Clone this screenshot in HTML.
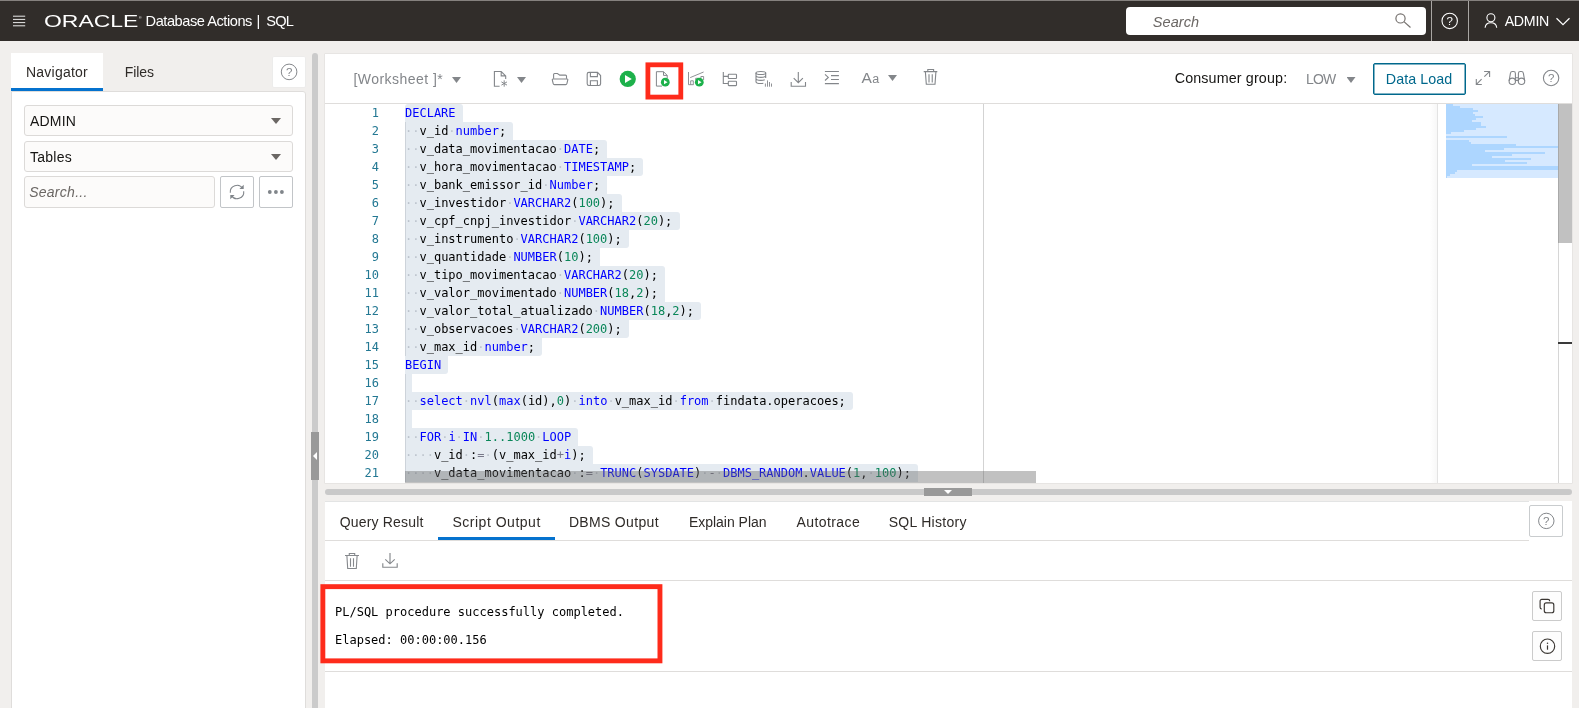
<!DOCTYPE html>
<html lang="en">
<head>
<meta charset="utf-8">
<title>Database Actions | SQL</title>
<style>
*{box-sizing:border-box;margin:0;padding:0}
html,body{width:1579px;height:708px;overflow:hidden;background:#f1efed;font-family:"Liberation Sans",sans-serif;color:#161513}
.abs{position:absolute}
#hdr{left:0;top:0;width:1579px;height:41px;background:#312d2a}
.tx{white-space:nowrap;line-height:20px}
.vsep{top:1px;width:1px;height:40px;background:#a9a6a3}
#srch{left:1126px;top:7px;width:300px;height:28px;background:#fff;border-radius:4px}
/* left panel */
#navtab{left:11px;top:53px;width:92px;height:38px;background:#fff;border-bottom:3px solid #0572ce}
.hbtn{background:#fff;border:1px solid #dcdad8;border-radius:2px}
#lpanel{left:11px;top:91px;width:295px;height:620px;background:#fff;border:1px solid #dfdddb;border-radius:0 3px 0 0}
.sel{left:24px;width:269px;height:31px;background:#fcfbfa;border:1px solid #dcdad8;border-radius:3px}
.tri{width:10px;height:6px;background:#6b6764;clip-path:polygon(0 0,100% 0,50% 100%)}
.tri.g{width:9px;background:#83868a}
#vsplit{left:312px;top:53px;width:6px;height:660px;background:#cbcbcb;border-radius:3px 3px 0 0}
#vhandle{left:311px;top:432px;width:8px;height:48px;background:#999}
/* editor */
#ed{left:325px;top:54px;width:1247px;height:429px;background:#fff;box-shadow:0 0 0 0.5px #dedcda}
#edtb{left:325px;top:54px;width:1247px;height:50px;background:#fff;border-bottom:1px solid #dfdddb}
.code{font-family:"DejaVu Sans Mono","Liberation Mono",monospace;font-size:12px;line-height:18px;white-space:pre;color:#000}
.ln{left:325px;width:54px;text-align:right;color:#237893}
.cl{left:405px}
.code b{font-weight:normal}
.selbg{left:405px;height:18px;background:#e5ebf1}
.mm{left:1446px;height:2px;background:#add6ff}
.k{color:#0000ff}.n{color:#098658}.w{color:#bcc3cc}.o{color:#778}
/* bottom */
#bp{left:325px;top:501px;width:1247px;height:210px;background:#fff}
.hline{height:1px;background:#dfdddb}
</style>
</head>
<body>
<div id="wrap" class="abs" style="left:0;top:0;width:1579px;height:708px;will-change:transform">
<!-- HEADER -->
<div id="hdr" class="abs">
  <div class="abs" style="left:0;top:0;width:1579px;height:1px;background:#85817e"></div>
  <svg class="abs" style="left:13px;top:15px" width="13" height="12" viewBox="0 0 13 12"><path d="M0 1.200h12.200M0 4.400h12.200M0 7.600h12.200M0 10.800h12.200" stroke="#fff" stroke-width="0.9" fill="none"/></svg>
  <svg class="abs" style="left:42px;top:10px" width="102" height="22" viewBox="0 0 102 22"><text x="2" y="16.800" font-family="Liberation Sans, sans-serif" font-size="16.500" fill="#fff" textLength="94.300" lengthAdjust="spacingAndGlyphs">ORACLE</text><text x="97" y="9" font-family="Liberation Sans, sans-serif" font-size="3.500" fill="#fff">®</text></svg>
  <div id="srch" class="abs"></div>
  <div class="abs vsep" style="left:1431px"></div>
  <div class="abs vsep" style="left:1468px"></div>
  <svg class="abs" style="left:1380px;top:0" width="199" height="41" viewBox="1380 0 199 41" fill="none" stroke="#fff" stroke-width="1.100">
    <circle cx="1400.500" cy="18.400" r="4.600" stroke="#75716e" stroke-width="1.200"/><path d="M1403.900 21.600l6.600 5.900" stroke="#75716e" stroke-width="1.200"/>
    <circle cx="1449.700" cy="20.900" r="7.700"/>
    <text x="1449.700" y="25" text-anchor="middle" font-family="Liberation Sans, sans-serif" font-size="11.500" fill="#fff" stroke="none">?</text>
    <circle cx="1490.900" cy="17.800" r="4"/><path d="M1485.100 27.800c.3-3.200 2.500-5 5.800-5s5.500 1.800 5.800 5"/>
    <path d="M1556.500 18.200l6.500 6.400 6.500-6.400" stroke-width="1.200"/>
  </svg>
</div>

<!-- LEFT PANEL -->
<div id="navtab" class="abs"></div>
<div class="abs" style="left:273px;top:57px;width:32px;height:30px;background:#fff;border-radius:1px;box-shadow:0 0 0 0.6px #e9eaea"></div>
<svg class="abs" style="left:280px;top:63px" width="18" height="18" viewBox="0 0 18 18"><circle cx="9.100" cy="8.900" r="7.800" stroke="#83868a" stroke-width="1" fill="none"/><text x="9.100" y="13.100" text-anchor="middle" font-family="Liberation Sans, sans-serif" font-size="11.500" fill="#83868a">?</text></svg>
<div id="lpanel" class="abs"></div>
<div class="abs sel" style="top:105px"><div class="abs tri" style="left:246px;top:12px"></div></div>
<div class="abs sel" style="top:141px"><div class="abs tri" style="left:246px;top:12px"></div></div>
<div class="abs sel" style="top:176px;width:191px;height:32px"></div>
<div class="abs hbtn" style="left:220px;top:176px;width:34px;height:32px;border-color:#c2c5c8"></div>
<div class="abs hbtn" style="left:259px;top:176px;width:34px;height:32px;border-color:#c2c5c8"></div>
<svg class="abs" style="left:220px;top:176px" width="74" height="32" viewBox="220 176 74 32" fill="none" stroke="#80858a" stroke-width="1.100">
<path d="M230.300 192.800a6.700 6.700 0 0 1 12.400-4.200M243.700 191.200a6.700 6.700 0 0 1-12.400 4.200"/>
<path d="M243.700 184.800v4.300h-4.300zM230.300 199.200v-4.300h4.300z" fill="#80858a" stroke="none"/>
<circle cx="269.800" cy="192" r="1.900" fill="#80858a" stroke="none"/><circle cx="275.900" cy="192" r="1.900" fill="#80858a" stroke="none"/><circle cx="281.900" cy="192" r="1.900" fill="#80858a" stroke="none"/>
</svg>

<!-- VERTICAL SPLITTER -->
<div id="vsplit" class="abs"></div>
<div id="vhandle" class="abs"></div>
<svg class="abs" style="left:313px;top:452px" width="4" height="8" viewBox="0 0 4 8"><path d="M4 0L0 4l4 4z" fill="#fff"/></svg>

<!-- EDITOR -->
<div id="ed" class="abs"></div>
<div id="edtb" class="abs"></div>
<div class="abs tri g" style="left:452px;top:77px"></div>
<div class="abs tri g" style="left:517px;top:77px"></div>
<div class="abs tri g" style="left:888px;top:75px"></div>
<div class="abs tri g" style="left:1346.500px;top:77px"></div>
<div class="abs" style="left:861.500px;top:68px;font-size:15.500px;line-height:20px;color:#83868a;white-space:nowrap">A<span style="font-size:12.500px;margin-left:0.300px">a</span></div>
<div class="abs" style="left:1373px;top:63px;width:93px;height:32px;border:1px solid #00688c;border-radius:2px;background:#fff;box-shadow:inset 0 0 0 0.5px #00688c"></div>
<svg class="abs" style="left:325px;top:54px" width="1247" height="50" viewBox="325 54 1247 50" fill="none" stroke="#83868a" stroke-width="1.100">
<path d="M499.600 86.300h-5.200v-14.800h6.800l4.500 4.400v3.200M501.200 71.500v4.400h4.500"/>
<path d="M504.200 80.300v6.400M501.400 81.900l5.600 3.200M507 81.900l-5.600 3.200" stroke-width="0.950"/>
<path d="M553.600 78.800v-4.300a1 1 0 0 1 1-1h2.800l2.400 1.600h5.700a1 1 0 0 1 1 1v2.700"/>
<path d="M552.900 79h14.300a.6.600 0 0 1 .6.800l-.9 3.800a1.300 1.300 0 0 1-1.300 1h-11.100a1.300 1.300 0 0 1-1.300-1l-.9-3.800a.6.600 0 0 1 .6-.8z"/>
<path d="M588.900 72.400h8.600l3.100 3.100v8.300a1.700 1.700 0 0 1-1.700 1.700h-10a1.700 1.700 0 0 1-1.700-1.700v-9.700a1.700 1.700 0 0 1 1.700-1.700z"/>
<path d="M590.400 72.400v4.200h7v-4.200M590.400 85.500v-4.800h7v4.800"/>
<circle cx="627.750" cy="78.900" r="8.100" fill="#1db14b" stroke="none"/><path d="M625 75.100l6.800 3.900-6.800 4z" fill="#fff" stroke="none"/>
<path d="M662 86.100h-5.600v-14.400h7.100l3.700 3.700v3M663.500 71.700v3.700h3.700" stroke-width="1"/>
<circle cx="665.300" cy="82.200" r="4.400" fill="#1db14b" stroke="none"/><path d="M664 80.100l3.500 2.100-3.500 2.100z" fill="#fff" stroke="none"/>
<path d="M688.500 72v12.700h5M690.700 84.700v-3.900h2.600v3.900M695.700 80v-1.700h2.800v1M700.900 78v-1.500h2.700v3.500M690.200 77.600l13.400-5.600" stroke-width="0.900"/>
<circle cx="699.300" cy="82.200" r="4.400" fill="#1db14b" stroke="none"/><path d="M698 80.100l3.500 2.100-3.500 2.100z" fill="#fff" stroke="none"/>
<path d="M723.300 72.100v11.400h5M723.300 76.400h5"/><rect x="728.300" y="74.300" width="8.200" height="4.200" rx=".6"/><rect x="728.300" y="81.300" width="8.200" height="4.300" rx=".6"/>
<ellipse cx="760.850" cy="73" rx="4.850" ry="1.500"/>
<path d="M756 72.700v9c0 1 2.100 1.800 4.850 1.800 .9 0 1.800-.1 2.500-.3M765.700 72.700v5.300M756 75.600c0 1 2.100 1.800 4.850 1.800s4.850-.8 4.850-1.800M756 78.600c0 1 2.100 1.800 4.850 1.800 1.600 0 3-.3 3.900-.7"/>
<path d="M765.400 83.500v3.200M767.500 80.400v6.300M769.500 82v4.700M771.500 83.500v3.200" stroke-width="0.900"/>
<path d="M798.300 72v10.500M793.700 78.100l4.600 4.600 4.600-4.600M791.200 82.100v4.200h14.300v-4.200"/>
<path d="M824.900 71.500h14M831 75.600h7.900M831 79.500h7.900M824.900 83.600h14M825 74.300l3.300 3.100-3.300 3.100"/>
<path d="M923.700 71.600h13.600M927.800 71.600v-2.100h5.800v2.100M925.400 71.900l.9 12.400h8.700l.9-12.400" />
<path d="M929 74.300v8.300M932.300 74.300v8.300" stroke-width="1.400" stroke="#9da0a3"/>
<path d="M1484.100 71.500h5.500v5.500M1489.500 71.600l-5.200 5.100M1476.300 79.100v5.400h5.500M1476.400 84.400l5.200-5.200"/>
<circle cx="1512.300" cy="81.300" r="3.200"/><circle cx="1521.500" cy="81.300" r="3.200"/>
<path d="M1509.100 81l1.300-7.600c.2-1.300.9-1.900 2-1.900h1.100c1.200 0 1.900.7 1.900 1.900v8M1524.700 81l-1.300-7.600c-.2-1.300-.9-1.900-2-1.900h-1.100c-1.200 0-1.900.7-1.900 1.900v8M1515.400 77.800h3.300M1515.400 80.400h3.300"/>
<circle cx="1551.100" cy="78" r="7.700"/>
<text x="1551.100" y="82.200" text-anchor="middle" font-family="Liberation Sans, sans-serif" font-size="11.500" fill="#83868a" stroke="none">?</text>
</svg>
<svg class="abs" style="left:640px;top:58px" width="50" height="46" viewBox="0 0 50 46"><rect x="7.900" y="6.800" width="32.900" height="32.300" fill="none" stroke="#fe2b1b" stroke-width="4.800"/></svg>
<div class="abs code ln" style="top:104px">1</div>
<div class="abs selbg" style="top:104px;width:57.8px;border-radius:3px 3px 0px 0"></div>
<div class="abs code ln" style="top:122px">2</div>
<div class="abs selbg" style="top:122px;width:108.4px;border-radius:0px 3px 0px 0"></div>
<div class="abs code ln" style="top:140px">3</div>
<div class="abs selbg" style="top:140px;width:202.3px;border-radius:0px 3px 0px 0"></div>
<div class="abs code ln" style="top:158px">4</div>
<div class="abs selbg" style="top:158px;width:238.4px;border-radius:0px 3px 3px 0"></div>
<div class="abs code ln" style="top:176px">5</div>
<div class="abs selbg" style="top:176px;width:202.3px;border-radius:0px 0px 0px 0"></div>
<div class="abs code ln" style="top:194px">6</div>
<div class="abs selbg" style="top:194px;width:216.7px;border-radius:0px 3px 0px 0"></div>
<div class="abs code ln" style="top:212px">7</div>
<div class="abs selbg" style="top:212px;width:274.5px;border-radius:0px 3px 3px 0"></div>
<div class="abs code ln" style="top:230px">8</div>
<div class="abs selbg" style="top:230px;width:223.9px;border-radius:0px 0px 3px 0"></div>
<div class="abs code ln" style="top:248px">9</div>
<div class="abs selbg" style="top:248px;width:195.0px;border-radius:0px 0px 0px 0"></div>
<div class="abs code ln" style="top:266px">10</div>
<div class="abs selbg" style="top:266px;width:260.1px;border-radius:0px 3px 0px 0"></div>
<div class="abs code ln" style="top:284px">11</div>
<div class="abs selbg" style="top:284px;width:260.1px;border-radius:0px 0px 0px 0"></div>
<div class="abs code ln" style="top:302px">12</div>
<div class="abs selbg" style="top:302px;width:296.2px;border-radius:0px 3px 3px 0"></div>
<div class="abs code ln" style="top:320px">13</div>
<div class="abs selbg" style="top:320px;width:223.9px;border-radius:0px 0px 3px 0"></div>
<div class="abs code ln" style="top:338px">14</div>
<div class="abs selbg" style="top:338px;width:137.3px;border-radius:0px 0px 3px 0"></div>
<div class="abs code ln" style="top:356px">15</div>
<div class="abs selbg" style="top:356px;width:43.3px;border-radius:0px 0px 3px 0"></div>
<div class="abs code ln" style="top:374px">16</div>
<div class="abs selbg" style="top:374px;width:7.2px;border-radius:0px 0px 0px 0"></div>
<div class="abs code ln" style="top:392px">17</div>
<div class="abs selbg" style="top:392px;width:447.9px;border-radius:0px 3px 3px 0"></div>
<div class="abs code ln" style="top:410px">18</div>
<div class="abs selbg" style="top:410px;width:7.2px;border-radius:0px 0px 0px 0"></div>
<div class="abs code ln" style="top:428px">19</div>
<div class="abs selbg" style="top:428px;width:173.4px;border-radius:0px 3px 0px 0"></div>
<div class="abs code ln" style="top:446px">20</div>
<div class="abs selbg" style="top:446px;width:187.8px;border-radius:0px 3px 0px 0"></div>
<div class="abs code ln" style="top:464px">21</div>
<div class="abs selbg" style="top:464px;width:512.9px;border-radius:0px 3px 0px 0"></div>
<div class="abs" style="left:405px;top:122px;width:1px;height:18px;background:#cdd3da"></div>
<div class="abs" style="left:405px;top:140px;width:1px;height:18px;background:#cdd3da"></div>
<div class="abs" style="left:405px;top:158px;width:1px;height:18px;background:#cdd3da"></div>
<div class="abs" style="left:405px;top:176px;width:1px;height:18px;background:#cdd3da"></div>
<div class="abs" style="left:405px;top:194px;width:1px;height:18px;background:#cdd3da"></div>
<div class="abs" style="left:405px;top:212px;width:1px;height:18px;background:#cdd3da"></div>
<div class="abs" style="left:405px;top:230px;width:1px;height:18px;background:#cdd3da"></div>
<div class="abs" style="left:405px;top:248px;width:1px;height:18px;background:#cdd3da"></div>
<div class="abs" style="left:405px;top:266px;width:1px;height:18px;background:#cdd3da"></div>
<div class="abs" style="left:405px;top:284px;width:1px;height:18px;background:#cdd3da"></div>
<div class="abs" style="left:405px;top:302px;width:1px;height:18px;background:#cdd3da"></div>
<div class="abs" style="left:405px;top:320px;width:1px;height:18px;background:#cdd3da"></div>
<div class="abs" style="left:405px;top:338px;width:1px;height:18px;background:#cdd3da"></div>
<div class="abs" style="left:405px;top:374px;width:1px;height:18px;background:#cdd3da"></div>
<div class="abs" style="left:405px;top:392px;width:1px;height:18px;background:#cdd3da"></div>
<div class="abs" style="left:405px;top:410px;width:1px;height:18px;background:#cdd3da"></div>
<div class="abs" style="left:405px;top:428px;width:1px;height:18px;background:#cdd3da"></div>
<div class="abs" style="left:405px;top:446px;width:1px;height:18px;background:#cdd3da"></div>
<div class="abs" style="left:405px;top:464px;width:1px;height:18px;background:#cdd3da"></div>
<div class="abs code cl" style="top:104px"><b class="k">DECLARE</b></div>
<div class="abs code cl" style="top:122px"><b class="w">··</b>v_id<b class="w">·</b><b class="k">number</b>;</div>
<div class="abs code cl" style="top:140px"><b class="w">··</b>v_data_movimentacao<b class="w">·</b><b class="k">DATE</b>;</div>
<div class="abs code cl" style="top:158px"><b class="w">··</b>v_hora_movimentacao<b class="w">·</b><b class="k">TIMESTAMP</b>;</div>
<div class="abs code cl" style="top:176px"><b class="w">··</b>v_bank_emissor_id<b class="w">·</b><b class="k">Number</b>;</div>
<div class="abs code cl" style="top:194px"><b class="w">··</b>v_investidor<b class="w">·</b><b class="k">VARCHAR2</b>(<b class="n">100</b>);</div>
<div class="abs code cl" style="top:212px"><b class="w">··</b>v_cpf_cnpj_investidor<b class="w">·</b><b class="k">VARCHAR2</b>(<b class="n">20</b>);</div>
<div class="abs code cl" style="top:230px"><b class="w">··</b>v_instrumento<b class="w">·</b><b class="k">VARCHAR2</b>(<b class="n">100</b>);</div>
<div class="abs code cl" style="top:248px"><b class="w">··</b>v_quantidade<b class="w">·</b><b class="k">NUMBER</b>(<b class="n">10</b>);</div>
<div class="abs code cl" style="top:266px"><b class="w">··</b>v_tipo_movimentacao<b class="w">·</b><b class="k">VARCHAR2</b>(<b class="n">20</b>);</div>
<div class="abs code cl" style="top:284px"><b class="w">··</b>v_valor_movimentado<b class="w">·</b><b class="k">NUMBER</b>(<b class="n">18</b>,<b class="n">2</b>);</div>
<div class="abs code cl" style="top:302px"><b class="w">··</b>v_valor_total_atualizado<b class="w">·</b><b class="k">NUMBER</b>(<b class="n">18</b>,<b class="n">2</b>);</div>
<div class="abs code cl" style="top:320px"><b class="w">··</b>v_observacoes<b class="w">·</b><b class="k">VARCHAR2</b>(<b class="n">200</b>);</div>
<div class="abs code cl" style="top:338px"><b class="w">··</b>v_max_id<b class="w">·</b><b class="k">number</b>;</div>
<div class="abs code cl" style="top:356px"><b class="k">BEGIN</b></div>
<div class="abs code cl" style="top:374px"></div>
<div class="abs code cl" style="top:392px"><b class="w">··</b><b class="k">select</b><b class="w">·</b><b class="k">nvl</b>(<b class="k">max</b>(id),<b class="n">0</b>)<b class="w">·</b><b class="k">into</b><b class="w">·</b>v_max_id<b class="w">·</b><b class="k">from</b><b class="w">·</b>findata.operacoes;</div>
<div class="abs code cl" style="top:410px"></div>
<div class="abs code cl" style="top:428px"><b class="w">··</b><b class="k">FOR</b><b class="w">·</b><b class="k">i</b><b class="w">·</b><b class="k">IN</b><b class="w">·</b><b class="n">1..1000</b><b class="w">·</b><b class="k">LOOP</b></div>
<div class="abs code cl" style="top:446px"><b class="w">····</b>v_id<b class="w">·</b>:<b class="o">=</b><b class="w">·</b>(v_max_id<b class="o">+</b><b class="k">i</b>);</div>
<div class="abs code cl" style="top:464px"><b class="w">····</b>v_data_movimentacao<b class="w">·</b>:<b class="o">=</b><b class="w">·</b><b class="k">TRUNC</b>(<b class="k">SYSDATE</b>)<b class="w">·</b><b class="o">-</b><b class="w">·</b><b class="k">DBMS_RANDOM</b>.<b class="k">VALUE</b>(<b class="n">1</b>,<b class="w">·</b><b class="n">100</b>);</div>
<div class="abs" style="left:983px;top:104px;width:1px;height:379px;background:#d3d3d3"></div>
<div class="abs" style="left:1430px;top:104px;width:8px;height:379px;background:linear-gradient(to right,rgba(0,0,0,0),rgba(0,0,0,0.035))"></div>
<div class="abs" style="left:1437px;top:104px;width:1px;height:379px;background:#e3e3e3"></div>
<div class="abs" style="left:1446px;top:104px;width:112px;height:74px;background:#d6e9ff"></div>
<div class="abs mm" style="top:104px;width:6.9px"></div>
<div class="abs mm" style="top:106px;width:13.9px"></div>
<div class="abs mm" style="top:108px;width:27.1px"></div>
<div class="abs mm" style="top:110px;width:32.1px"></div>
<div class="abs mm" style="top:112px;width:27.1px"></div>
<div class="abs mm" style="top:114px;width:29.1px"></div>
<div class="abs mm" style="top:116px;width:37.1px"></div>
<div class="abs mm" style="top:118px;width:30.1px"></div>
<div class="abs mm" style="top:120px;width:26.1px"></div>
<div class="abs mm" style="top:122px;width:35.1px"></div>
<div class="abs mm" style="top:124px;width:35.1px"></div>
<div class="abs mm" style="top:126px;width:40.1px"></div>
<div class="abs mm" style="top:128px;width:30.1px"></div>
<div class="abs mm" style="top:130px;width:18.1px"></div>
<div class="abs mm" style="top:132px;width:5.1px"></div>
<div class="abs mm" style="top:136px;width:61.1px"></div>
<div class="abs mm" style="top:140px;width:23.1px"></div>
<div class="abs mm" style="top:142px;width:25.1px"></div>
<div class="abs mm" style="top:144px;width:70.1px"></div>
<div class="abs mm" style="top:146px;width:112.0px"></div>
<div class="abs mm" style="top:148px;width:58.1px"></div>
<div class="abs mm" style="top:150px;width:39.1px"></div>
<div class="abs mm" style="top:152px;width:99.0px"></div>
<div class="abs mm" style="top:154px;width:66.1px"></div>
<div class="abs mm" style="top:156px;width:46.1px"></div>
<div class="abs mm" style="top:158px;width:85.1px"></div>
<div class="abs mm" style="top:160px;width:59.0px"></div>
<div class="abs mm" style="top:162px;width:81.1px"></div>
<div class="abs mm" style="top:164px;width:26.0px"></div>
<div class="abs mm" style="top:166px;width:112.0px"></div>
<div class="abs mm" style="top:168px;width:112.0px"></div>
<div class="abs mm" style="top:170px;width:11.1px"></div>
<div class="abs mm" style="top:172px;width:9.1px"></div>
<div class="abs mm" style="top:174px;width:4.0px"></div>
<div class="abs mm" style="top:176px;width:1.0px"></div>
<div class="abs" style="left:1558px;top:104px;width:1px;height:379px;background:#d6d6d6"></div>
<div class="abs" style="left:1558px;top:104px;width:14px;height:139px;background:#c1c1c1;border-left:1px solid #a9a9a9"></div>
<div class="abs" style="left:1558px;top:342px;width:14px;height:2px;background:#3a3a3a"></div>
<div class="abs" style="left:405px;top:471px;width:631px;height:12px;background:rgba(100,100,100,0.4)"></div>

<!-- H SPLITTER -->
<div class="abs" style="left:325px;top:489px;width:1247px;height:6px;background:#c9c9c9;border-radius:3px"></div>
<div class="abs" style="left:924px;top:488px;width:48px;height:8px;background:#999"></div>
<svg class="abs" style="left:944px;top:490px" width="8" height="4" viewBox="0 0 8 4"><path d="M0 0h8l-4 4z" fill="#fff"/></svg>

<!-- BOTTOM PANEL -->
<div id="bp" class="abs"></div>
<div class="abs hline" style="left:325px;top:540px;width:1204px"></div>
<div class="abs" style="left:438px;top:537px;width:117px;height:3px;background:#0572ce"></div>
<div class="abs hline" style="left:325px;top:501px;width:1204px;background:#e3e4e4"></div>
<div class="abs hbtn" style="left:1529px;top:505px;width:34px;height:32px;border-color:#c9ccce"></div>
<svg class="abs" style="left:1537px;top:512px" width="18" height="18" viewBox="0 0 18 18"><circle cx="9.300" cy="8.900" r="7.700" stroke="#83868a" stroke-width="1" fill="none"/><text x="9.300" y="13.100" text-anchor="middle" font-family="Liberation Sans, sans-serif" font-size="11.500" fill="#83868a">?</text></svg>
<svg class="abs" style="left:344px;top:552px" width="16" height="18" viewBox="0 0 16 18"><path d="M1 3.500h14M5.300 3.500v-2h5.400v2M2.900 3.800l.8 12.700h8.600l.8-12.700M6.500 6.200v8.500M9.500 6.200v8.500" stroke="#85888c" stroke-width="1.100" fill="none"/></svg>
<svg class="abs" style="left:381px;top:552px" width="18" height="17" viewBox="0 0 18 17"><path d="M9 1v10.500M4.300 7.300l4.700 4.500 4.700-4.500M1.800 11.200v4h14.400v-4" stroke="#85888c" stroke-width="1.150" fill="none"/></svg>
<div class="abs hline" style="left:325px;top:580px;width:1247px"></div>
<div class="abs code" style="left:335px;top:603px">PL/SQL procedure successfully completed.</div>
<div class="abs code" style="left:335px;top:631px">Elapsed: 00:00:00.156</div>
<svg class="abs" style="left:316px;top:580px" width="352" height="88" viewBox="0 0 352 88"><rect x="6.850" y="6.650" width="337.100" height="74.200" fill="none" stroke="#fe2b1b" stroke-width="4.900"/></svg>
<div class="abs hline" style="left:325px;top:671px;width:1247px"></div>
<div class="abs hbtn" style="left:1532px;top:591px;width:30px;height:30px;border-color:#cbcbcb;background:#fdfdfd"></div>
<div class="abs hbtn" style="left:1532px;top:631px;width:30px;height:30px;border-color:#cbcbcb;background:#fdfdfd"></div>
<svg class="abs" style="left:1532px;top:591px" width="30" height="70" viewBox="1532 591 30 70" fill="none" stroke="#3a3632" stroke-width="1.150"><rect x="1544.300" y="602.900" width="9.500" height="9.800" rx="2"/><path d="M1541.800 609h-.1a1.700 1.700 0 0 1-1.600-1.700v-6.300a1.700 1.700 0 0 1 1.700-1.700h6.200a1.700 1.700 0 0 1 1.700 1.700v.2"/><circle cx="1547.500" cy="646.200" r="7.200"/><path d="M1547.500 645.400v4.300" stroke-width="1.200"/><circle cx="1547.500" cy="643.300" r=".75" fill="#3a3632" stroke="none"/></svg>

<div class="abs tx" style="left:145.61px;top:11.0px;font-size:14.6px;letter-spacing:-0.456px;color:#fff;">Database Actions</div>
<div class="abs tx" style="left:256.60px;top:11.0px;font-size:14.6px;letter-spacing:0.000px;color:#fff;">|</div>
<div class="abs tx" style="left:266.35px;top:11.0px;font-size:14.6px;letter-spacing:-0.854px;color:#fff;">SQL</div>
<div class="abs tx" style="left:1152.86px;top:11.7px;font-size:14.5px;letter-spacing:0.065px;color:#6b6764;font-style:italic;">Search</div>
<div class="abs tx" style="left:1504.66px;top:11.2px;font-size:14.2px;letter-spacing:-0.252px;color:#fff;">ADMIN</div>
<div class="abs tx" style="left:25.90px;top:61.9px;font-size:14px;letter-spacing:0.247px;color:#2f2b28;">Navigator</div>
<div class="abs tx" style="left:124.66px;top:61.9px;font-size:14px;letter-spacing:-0.041px;color:#2f2b28;">Files</div>
<div class="abs tx" style="left:29.94px;top:111.0px;font-size:14px;letter-spacing:0.199px;color:#161513;">ADMIN</div>
<div class="abs tx" style="left:29.94px;top:147.0px;font-size:14px;letter-spacing:0.282px;color:#161513;">Tables</div>
<div class="abs tx" style="left:29.14px;top:182.1px;font-size:14px;letter-spacing:0.276px;color:#6b6764;font-style:italic;">Search...</div>
<div class="abs tx" style="left:353.40px;top:69.0px;font-size:14px;letter-spacing:0.470px;color:#83868a;">[Worksheet ]*</div>
<div class="abs tx" style="left:1174.66px;top:68.2px;font-size:14.3px;letter-spacing:0.144px;color:#161513;">Consumer group:</div>
<div class="abs tx" style="left:1305.88px;top:69.2px;font-size:14px;letter-spacing:-0.745px;color:#83868a;">LOW</div>
<div class="abs tx" style="left:1385.86px;top:69.1px;font-size:14.3px;letter-spacing:0.035px;color:#00688c;">Data Load</div>
<div class="abs tx" style="left:339.66px;top:512.2px;font-size:14px;letter-spacing:0.178px;color:#2f2b28;">Query Result</div>
<div class="abs tx" style="left:452.40px;top:512.2px;font-size:14px;letter-spacing:0.518px;color:#2f2b28;">Script Output</div>
<div class="abs tx" style="left:568.88px;top:512.2px;font-size:14px;letter-spacing:0.330px;color:#2f2b28;">DBMS Output</div>
<div class="abs tx" style="left:688.92px;top:512.2px;font-size:14px;letter-spacing:-0.013px;color:#2f2b28;">Explain Plan</div>
<div class="abs tx" style="left:796.44px;top:512.2px;font-size:14px;letter-spacing:0.430px;color:#2f2b28;">Autotrace</div>
<div class="abs tx" style="left:888.64px;top:512.2px;font-size:14px;letter-spacing:0.295px;color:#2f2b28;">SQL History</div>
</div>
</body>
</html>
